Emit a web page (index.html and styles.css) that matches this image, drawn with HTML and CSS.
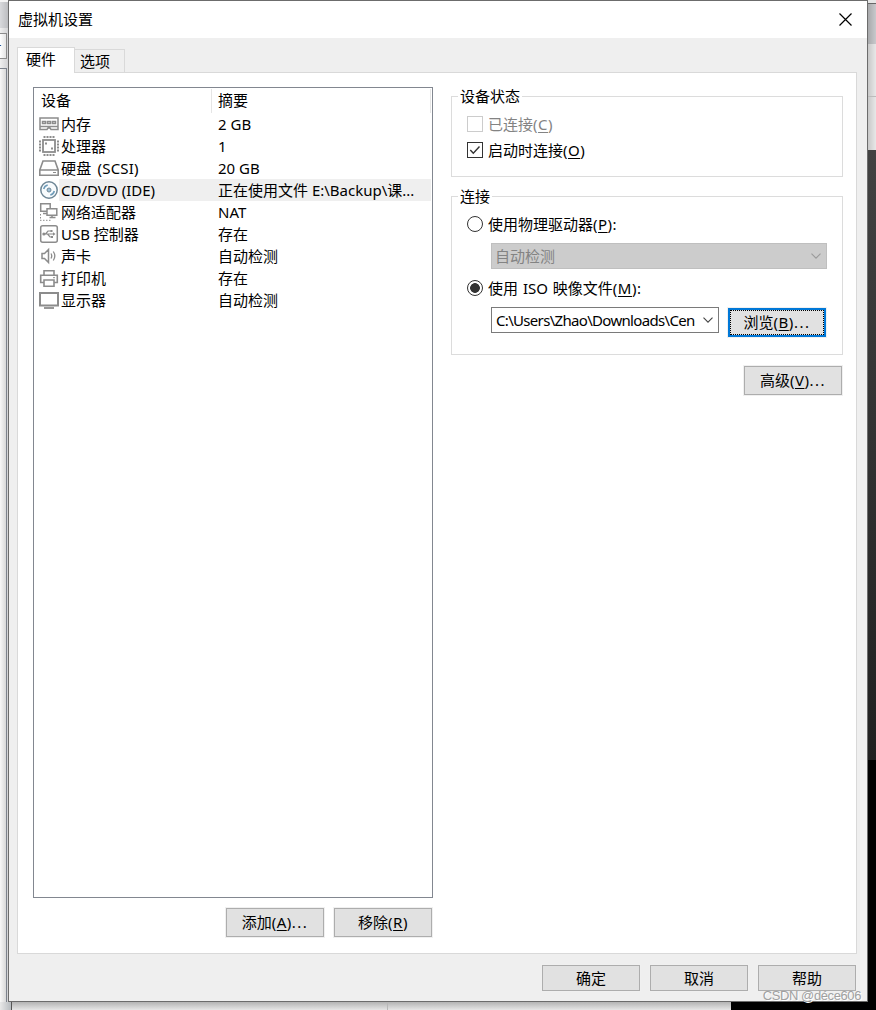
FILE: index.html
```html
<!DOCTYPE html>
<html lang="zh-CN">
<head>
  <meta charset="UTF-8">
  <title>虚拟机设置</title>
  <link rel="stylesheet" href="styles.css">
</head>
<body>
<div class="desktop">

  <!-- Window behind, left edge -->
  <div class="behind-left">
    <div class="behind-toolbar"></div>
    <div class="behind-box">-</div>
    <div class="behind-panel"></div>
  </div>

  <!-- Settings dialog -->
  <div class="dialog">
    <div class="title-bar">
      <span>虚拟机设置</span>
      <svg class="close" width="13" height="13" viewBox="0 0 13 13"><path d="M.5 .5l12 12M12.500 .5l-12 12" stroke="#000" stroke-width="1.200" fill="none"/></svg>
    </div>

    <div class="tabs">
      <div class="tab active">硬件</div>
      <div class="tab">选项</div>
    </div>

    <div class="pane">
      <!-- Device list -->
      <div class="left-col">
        <div class="device-list">
          <div class="list-head"><span class="name">设备</span><span class="summary">摘要</span></div>
          <div class="row">
            <svg class="icon" viewBox="0 0 20 20"><path d="M1 4h18v11.500h-7l-1-1.500h-2l-1 1.500H1zM1 12.500h18" fill="none" stroke="#8c8c8c" stroke-width="1.500"/><path d="M3.500 7.500h3v2h-3zM8.500 7.500h3v2h-3zM13.500 7.500h3v2h-3z" fill="none" stroke="#8c8c8c" stroke-width="1.500"/></svg>
            <span class="name">内存</span><span class="summary">2 GB</span>
          </div>
          <div class="row">
            <svg class="icon" viewBox="0 0 20 20"><rect x="4" y="4" width="12" height="12" fill="none" stroke="#8c8c8c" stroke-width="1.800"/><path d="M4.500 1h11.500M4.500 19h11.500M1 4.500v11.500M19 4.500v11.500" stroke="#8c8c8c" stroke-width="2" stroke-dasharray="2 1"/><path d="M6 6.500h2v2H6zM12 11.500h2v2h-2z" fill="#8c8c8c"/></svg>
            <span class="name">处理器</span><span class="summary">1</span>
          </div>
          <div class="row">
            <svg class="icon" viewBox="0 0 20 20"><path d="M.8 12L4 3h12l3.200 9v5.200H.8zM.8 12h18.400" fill="none" stroke="#8c8c8c" stroke-width="1.600"/><path d="M14 14.500h3" stroke="#8c8c8c"/></svg>
            <span class="name scsi">硬盘 (SCSI)</span><span class="summary">20 GB</span>
          </div>
          <div class="row selected">
            <svg class="icon" viewBox="0 0 20 20"><circle cx="10" cy="10" r="8.200" fill="#f8fbfd" stroke="#6f8796" stroke-width="1.500"/><circle cx="10" cy="10" r="2" fill="#9cc0d8" stroke="#6f8796"/><path d="M4.700 9a5.500 5.500 0 0 1 4-4M15.300 11a5.500 5.500 0 0 1-4 4" fill="none" stroke="#6b9ab8" stroke-width="1.500"/></svg>
            <span class="name">CD/DVD (IDE)</span><span class="summary">正在使用文件 E:\Backup\课...</span>
          </div>
          <div class="row">
            <svg class="icon" viewBox="0 0 20 20"><path d="M1.700 1.700h9.500v7.600H1.700zM4 11.500h4" fill="none" stroke="#8c8c8c" stroke-width="1.500"/><path d="M8 6.700h9.800v6.600H8zM10.500 15.500h6M13 13v2" fill="#fff" stroke="#8c8c8c" stroke-width="1.500"/><path d="M1.500 12v6M1 18.300h12" fill="none" stroke="#8c8c8c" stroke-dasharray="1.500 1.500"/></svg>
            <span class="name">网络适配器</span><span class="summary">NAT</span>
          </div>
          <div class="row">
            <svg class="icon" viewBox="0 0 20 20"><rect x="1.700" y="1.700" width="16.600" height="16.600" rx="2" fill="none" stroke="#8c8c8c" stroke-width="1.500"/><path d="M4 10h11M6.500 10L9 7h3M8.500 10l2.500 3h2" fill="none" stroke="#8c8c8c" stroke-width="1.200"/><circle cx="4.900" cy="10" r="1.600" fill="#8c8c8c"/><path d="M11.500 6h2v2h-2zM12 12h2v2h-2zM14 8.200l2.500 1.800-2.500 1.800z" fill="#8c8c8c"/></svg>
            <span class="name">USB 控制器</span><span class="summary">存在</span>
          </div>
          <div class="row">
            <svg class="icon" viewBox="0 0 20 20"><path d="M3 7.500h2.500l4-4v13l-4-4H3z" fill="none" stroke="#8c8c8c" stroke-width="1.500"/><path d="M12 7.500q1.500 2.500 0 5M14.300 5.500q3 4.500 0 9" fill="none" stroke="#8c8c8c" stroke-width="1.300"/></svg>
            <span class="name">声卡</span><span class="summary">自动检测</span>
          </div>
          <div class="row">
            <svg class="icon" viewBox="0 0 20 20"><path d="M5 7V2.700h10V7M5 14.500H1.700V7.200h16.600v7.300H15" fill="none" stroke="#8c8c8c" stroke-width="1.600"/><path d="M5 12h10v6.300H5z" fill="none" stroke="#8c8c8c" stroke-width="1.600"/><path d="M14 9.700h2" stroke="#8c8c8c"/></svg>
            <span class="name">打印机</span><span class="summary">存在</span>
          </div>
          <div class="row">
            <svg class="icon" viewBox="0 0 20 20"><path d="M1 3h18v12.500H1z" fill="none" stroke="#8c8c8c" stroke-width="2"/><path d="M5 18h10" stroke="#8c8c8c" stroke-width="1.800"/></svg>
            <span class="name">显示器</span><span class="summary">自动检测</span>
          </div>
        </div>
        <div class="list-buttons">
          <div class="btn">添加<span class="key">(<u>A</u>)</span><span class="dots">...</span></div>
          <div class="btn">移除<span class="key">(<u>R</u>)</span></div>
        </div>
      </div>

      <!-- Device options -->
      <div class="right-col">
        <fieldset class="status">
          <legend>设备状态</legend>
          <div class="option disabled"><span class="check"></span>已连接<span class="key">(<u>C</u>)</span></div>
          <div class="option"><span class="check"><svg width="14" height="14" viewBox="0 0 14 14"><path d="M2.300 7l3 3.200L11.500 3.500" fill="none" stroke="#333" stroke-width="1.400"/></svg></span>启动时连接<span class="key">(<u>O</u>)</span></div>
        </fieldset>

        <fieldset class="connection">
          <legend>连接</legend>
          <div class="option"><span class="radio"></span>使用物理驱动器<span class="key">(<u>P</u>):</span></div>
          <div class="combo disabled">
            <span class="value">自动检测</span>
            <svg width="10" height="6" viewBox="0 0 10 6"><path d="M.5 .7L5 5.200 9.500 .7" fill="none" stroke="#9a9a9a" stroke-width="1.100"/></svg>
          </div>
          <div class="option iso"><span class="radio on"></span>使用 ISO 映像文件<span class="key">(<u>M</u>):</span></div>
          <div class="iso-row">
            <div class="combo">
              <span class="value path">C:\Users\Zhao\Downloads\Cen</span>
              <svg width="10" height="6" viewBox="0 0 10 6"><path d="M.5 .7L5 5.200 9.500 .7" fill="none" stroke="#444" stroke-width="1.100"/></svg>
            </div>
            <div class="btn focused"><div class="focus-rect">浏览<span class="key">(<u>B</u>)</span><span class="dots">...</span></div></div>
          </div>
        </fieldset>
        <div class="btn advanced">高级<span class="key">(<u>V</u>)</span><span class="dots">...</span></div>
      </div>
    </div>

    <div class="dialog-buttons">
      <div class="btn">确定</div>
      <div class="btn">取消</div>
      <div class="btn">帮助</div>
    </div>
  </div>

  <!-- Window behind, right edge -->
  <div class="behind-right">
    <div class="strip-title"></div>
    <div class="strip-menu"></div>
    <div class="strip-tools"></div>
    <div class="strip-screen"></div>
  </div>

  <!-- Window behind, bottom edge -->
  <div class="behind-bottom">
    <div class="cell-edge"></div>
    <div class="cell-a"></div>
    <div class="cell-b"></div>
    <div class="cell-black"></div>
  </div>

  <div class="watermark">CSDN @déce606</div>
</div>
</body>
</html>
```
FILE: styles.css
```css
* {
  box-sizing: border-box;
}

body {
  margin: 0;
  overflow: hidden;
  font-family: "Noto Sans", "Noto Sans CJK SC", sans-serif;
  font-size: 15px;
  line-height: 20px;
  color: #000;
}

.desktop {
  position: relative;
  display: grid;
  grid-template-columns: 8px 860px 8px;
  grid-template-rows: 1002px 8px;
  width: 876px;
  height: 1010px;
}

u {
  text-decoration-thickness: 1px;
  text-underline-offset: 2px;
}

/* Windows behind the dialog */
.behind-left {
  display: flex;
  flex-direction: column;
  background: linear-gradient(to right, #f0f0f0, #d2d2d4);
}

.behind-toolbar {
  height: 28px;
  border-top: 2px solid #f4f4f4;
  background: linear-gradient(to right, #d8d9dc, #bcbdc0);
}

.behind-box {
  width: 7px;
  height: 26px;
  margin-top: 5px;
  border: 1px solid #8c8c8c;
  border-left: 0;
  background: linear-gradient(to right, #fff, #e4e4e4);
  font-size: 10px;
  line-height: 20px;
  text-indent: -2px;
}

.behind-panel {
  flex: 1;
  width: 7px;
  margin-top: 9px;
  border-top: 1px solid #7c828c;
  border-right: 1px solid #7c828c;
  background: linear-gradient(to right, #f8f8f8, #d8d8d8);
}

.behind-right {
  display: flex;
  flex-direction: column;
  background: #000;
}

.strip-title {
  height: 44px;
  border-top: 3px solid #e6e6e6;
  background: linear-gradient(to right, #a8a9ab, #c8c9cc);
  box-shadow: inset 0 1px #666;
}

.strip-menu {
  height: 53px;
  border-bottom: 1px solid #bbb;
  background: linear-gradient(to right, #c8c8c8, #e8e8e8);
}

.strip-tools {
  height: 53px;
  background: linear-gradient(to right, #c8c8c8, #e8e8e8);
}

.strip-screen {
  height: 610px;
  background: linear-gradient(#424242, #202020);
}

.behind-bottom {
  grid-column: 1 / 4;
  display: flex;
}

.behind-bottom > div {
  background: linear-gradient(#b4b4b4, #e6e6e6);
}

.behind-bottom .cell-edge {
  width: 12px;
  border-right: 1px solid #555;
  background: linear-gradient(to right, #e8e8e8, #b8bcc0);
}

.behind-bottom .cell-a {
  width: 376px;
  border-right: 1px solid #b8b8b8;
}

.behind-bottom .cell-b {
  width: 343px;
}

.behind-bottom .cell-black {
  flex: 1;
  background: #000;
}

/* Dialog */
.dialog {
  border: 1px solid #6c6c6c;
  background: #efefef;
}

.title-bar {
  display: flex;
  align-items: center;
  justify-content: space-between;
  height: 37px;
  padding: 0 15px 1px 9px;
  background: #fff;
}

.tabs {
  display: flex;
  align-items: flex-end;
  height: 34px;
  padding-left: 8px;
}

.tab {
  width: 50px;
  height: 23px;
  border: 1px solid #d9d9d9;
  border-left: 0;
  border-bottom: 0;
  padding-left: 5px;
  line-height: 22px;
}

.tab.active {
  z-index: 1;
  width: 58px;
  height: 26px;
  margin-bottom: -1px;
  border-left: 1px solid #d9d9d9;
  padding-left: 8px;
  background: #fff;
}

.pane {
  display: flex;
  gap: 18px;
  width: 840px;
  height: 882px;
  margin-left: 8px;
  border: 1px solid #d9d9d9;
  padding: 14px 0 0 15px;
  background: #fff;
}

.left-col {
  width: 400px;
}

.right-col {
  width: 392px;
}

/* Device list */
.device-list {
  height: 811px;
  border: 1px solid #828790;
  padding: 1px 1px 0 5px;
}

.list-head {
  display: flex;
  height: 24px;
  margin-left: 2px;
  border-right: 1px solid #e5e5e5;
  line-height: 23px;
}

.list-head .name {
  width: 171px;
  border-right: 1px solid #e5e5e5;
}

.list-head .summary {
  padding-left: 6px;
}

.row {
  display: flex;
  align-items: center;
  height: 22px;
  line-height: 22px;
  white-space: pre;
}

.row .icon {
  width: 20px;
  height: 20px;
}

.row .name {
  width: 157px;
  padding-left: 2px;
}

.row .scsi {
  word-spacing: 2px;
  letter-spacing: .2px;
}

.row .summary {
  flex: 1;
  padding-left: 2px;
}

.row.selected .name,
.row.selected .summary {
  background: #efefef;
}

.list-buttons {
  display: flex;
  justify-content: flex-end;
  gap: 10px;
  margin-top: 10px;
  padding-right: 1px;
}

/* Buttons */
.btn {
  width: 98px;
  height: 29px;
  border: 1px solid #adadad;
  background: #e1e1e1;
  box-shadow: 0 0 0 1px #f0f0f0;
  line-height: 27px;
  text-align: center;
}

.key {
  letter-spacing: .5px;
}

.dots {
  letter-spacing: 1.5px;
}

.btn.focused {
  margin: 1px 0 0 9px;
  border: 2px solid #0078d7;
}

.focus-rect {
  height: 25px;
  border: 1px dotted #000;
  line-height: 23px;
}

.btn.advanced {
  margin: 11px 1px 0 auto;
}

.dialog-buttons {
  display: flex;
  justify-content: flex-end;
  gap: 10px;
  margin-top: 11px;
  padding-right: 11px;
}

.dialog-buttons .btn {
  height: 26px;
  line-height: 24px;
}

/* Groups */
fieldset {
  margin: 0;
  border: 1px solid #dcdcdc;
  padding: 5px 15px 0;
}

legend {
  margin-left: -9px;
  padding: 0 2px;
  line-height: 19px;
}

.status {
  height: 90px;
}

.connection {
  height: 168px;
  margin-top: 10px;
}

.option {
  display: flex;
  align-items: center;
  height: 26px;
  white-space: pre;
}

.option.disabled {
  color: #838383;
}

.option.iso {
  word-spacing: 1px;
}

.check,
.radio {
  width: 16px;
  height: 16px;
  margin-right: 5px;
  border: 1px solid #333;
  background: #fff;
}

.check svg {
  display: block;
}

.disabled .check {
  border-color: #ccc;
}

.radio {
  border-radius: 50%;
}

.radio.on {
  background: radial-gradient(circle, #333 4.500px, #fff 5.200px);
}

.combo {
  display: flex;
  align-items: center;
  width: 228px;
  height: 26px;
  margin-left: 24px;
  border: 1px solid #7a7a7a;
  padding: 0 5px 0 4px;
  background: #fff;
}

.combo .value {
  flex: 1;
  white-space: nowrap;
}

.combo .path {
  letter-spacing: -.68px;
}

.combo.disabled {
  width: 336px;
  margin-top: 6px;
  margin-bottom: 6px;
  padding-left: 3px;
  border-color: #bfbfbf;
  background: #ccc;
  color: #838383;
}

.iso-row {
  display: flex;
  align-items: flex-start;
  margin-top: 6px;
}

.watermark {
  position: absolute;
  right: 15px;
  bottom: 7px;
  color: #a0a0a0;
  font-family: "Liberation Sans", sans-serif;
  font-size: 13px;
  letter-spacing: -.4px;
  line-height: 14px;
  text-shadow: 1px 1px #fff;
}
```
